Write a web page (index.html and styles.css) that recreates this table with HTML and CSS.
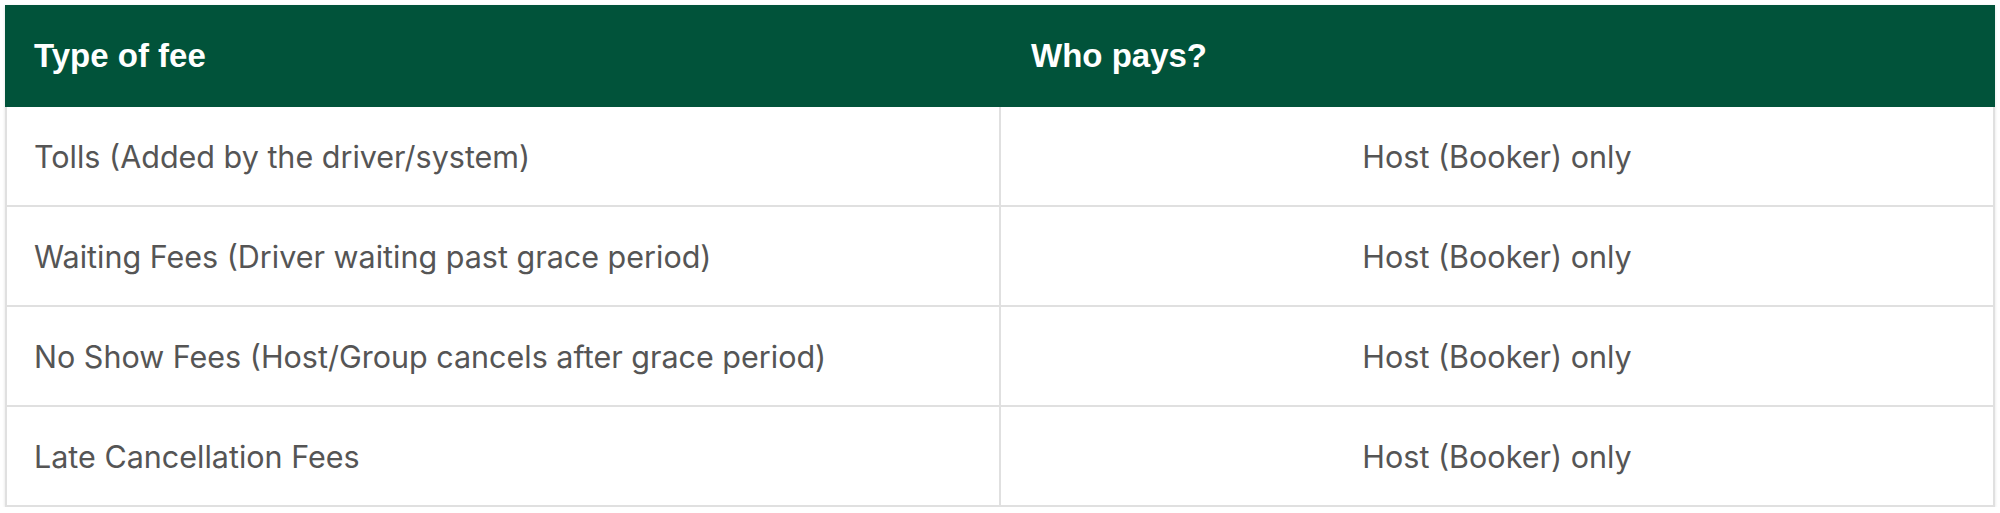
FILE: index.html
```html
<!DOCTYPE html>
<html lang="en">
<head>
<meta charset="utf-8">
<title>Fees</title>
<link rel="stylesheet" href="styles.css">
</head>
<body>
<div class="wrap">
  <table class="fees">
    <thead>
      <tr><th>Type of fee</th><th>Who pays?</th></tr>
    </thead>
    <tbody>
      <tr><td>Tolls (Added by the driver/system)</td><td class="c">Host (Booker) only</td></tr>
      <tr><td>Waiting Fees (Driver waiting past grace period)</td><td class="c">Host (Booker) only</td></tr>
      <tr><td>No Show Fees (Host/Group cancels after grace period)</td><td class="c">Host (Booker) only</td></tr>
      <tr><td>Late Cancellation Fees</td><td class="c">Host (Booker) only</td></tr>
    </tbody>
  </table>
</div>
</body>
</html>
```
FILE: styles.css
```css
html, body { margin: 0; padding: 0; background: #ffffff; }
.wrap { padding: 5px 5px 0 5px; }
.fees {
  width: 1990px;
  border-collapse: collapse;
  table-layout: fixed;
  box-shadow: 0 1px 3px rgba(0,0,0,0.12);
}
.fees th, .fees td {
  width: 50%;
  box-sizing: border-box;
  border: 2px solid #e0e0e0;
  padding: 0 30px;
  text-align: left;
  vertical-align: middle;
}
.fees th:first-child, .fees td:first-child { padding-left: 27px; }
.fees th {
  height: 100px;
  background: #01533a;
  color: #ffffff;
  font-family: "Liberation Sans", Arial, sans-serif;
  font-weight: 700;
  font-size: 33px;
  border-color: #01533a;
  border-left-color: #d6d6d6;
}
.fees th:first-child { border-left-color: #01533a; }
.fees td {
  height: 100px;
  color: #555555;
  font-family: Inter, "Liberation Sans", sans-serif;
  font-size: 30.5px;
}
.fees td.c { text-align: center; }
```
